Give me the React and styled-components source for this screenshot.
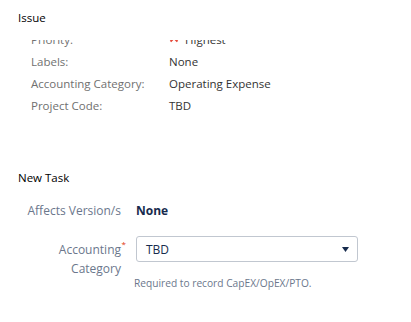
import React from "react";
import styled, { createGlobalStyle } from "styled-components";

const Global = createGlobalStyle`
  html, body { margin: 0; padding: 0; background: #ffffff; }
  body { font-family: "Open Sans", "Noto Sans", sans-serif; }
`;

const Page = styled.div`
  width: 411px;
  height: 322px;
  padding: 9px 0 0 18px;
  box-sizing: border-box;
  overflow: hidden;
`;

const SectionTitle = styled.div`
  font-size: 11.5px;
  line-height: 18px;
  color: #000;
`;

const Viewport = styled.div`
  margin-top: 13px;
  height: 78px;
  overflow: hidden;
`;

const DetailsList = styled.dl`
  margin: -12px 0 0 13px;
  display: grid;
  grid-template-columns: 138px 1fr;
  grid-auto-rows: 22px;
  align-items: center;
  font-size: 11.5px;
`;

const Term = styled.dt`
  color: #707070;
`;

const Value = styled.dd`
  margin: 0;
  color: #333333;
  display: flex;
  align-items: center;
  gap: 6px;
`;

const Spacer = styled.div`
  height: ${(p) => p.$h}px;
`;

const Form = styled.div`
  display: grid;
  grid-template-columns: 103px 222px;
  column-gap: 15px;
  font-size: 12px;
`;

const Label = styled.div`
  text-align: right;
  color: #6b778c;
  line-height: 19px;
  padding-top: ${(p) => p.$pt || 0}px;
  position: relative;
`;

const Req = styled.span`
  color: #de350b;
  font-size: 8px;
  line-height: 8px;
  position: absolute;
  right: -5px;
  top: ${(p) => p.$top || 0}px;
`;

const Strong = styled.div`
  font-weight: 700;
  color: #172b4d;
  line-height: 19px;
`;

const Row = styled.div`
  display: contents;
`;

const FieldCol = styled.div`
  display: flex;
  flex-direction: column;
`;

const Select = styled.div`
  height: 26px;
  box-sizing: border-box;
  border: 1px solid #c1c7d0;
  border-radius: 3px;
  display: flex;
  align-items: center;
  justify-content: space-between;
  padding: 0 8px 0 9px;
  color: #172b4d;
  font-size: 12px;
  background: #fff;
`;

const Help = styled.div`
  margin: 14px 0 0 -2px;
  color: #6b778c;
  font-size: 10.2px;
`;

const RowGap = styled.div`
  grid-column: 1 / -1;
  height: ${(p) => p.$h}px;
`;

const PriorityIcon = () => (
  <svg width="10" height="8" viewBox="0 0 10 8">
    <path d="M1.5 6.5 L5 3 L8.5 6.5" fill="none" stroke="#e5493a" strokeWidth="2" />
  </svg>
);

export default function App() {
  return (
    <>
      <Global />
      <Page>
        <SectionTitle>Issue</SectionTitle>
        <Viewport>
          <DetailsList>
            <Term>Priority:</Term>
            <Value>
              <PriorityIcon />
              Highest
            </Value>
            <Term>Labels:</Term>
            <Value>None</Value>
            <Term>Accounting Category:</Term>
            <Value>Operating Expense</Value>
            <Term>Project Code:</Term>
            <Value>TBD</Value>
          </DetailsList>
        </Viewport>
        <Spacer $h={51} />
        <SectionTitle>New Task</SectionTitle>
        <Spacer $h={14} />
        <Form>
          <Row>
            <Label>Affects Version/s</Label>
            <Strong>None</Strong>
          </Row>
          <RowGap $h={16} />
          <Row>
            <Label $pt={4}>
              Accounting
              <Req $top={4}>*</Req>
              <br />
              Category
            </Label>
            <FieldCol>
              <Select>
                <span>TBD</span>
                <svg width="7" height="5" viewBox="0 0 7 5">
                  <path d="M0 0 H7 L3.5 5 Z" fill="#172b4d" />
                </svg>
              </Select>
              <Help>Required to record CapEX/OpEX/PTO.</Help>
            </FieldCol>
          </Row>
        </Form>
      </Page>
    </>
  );
}
